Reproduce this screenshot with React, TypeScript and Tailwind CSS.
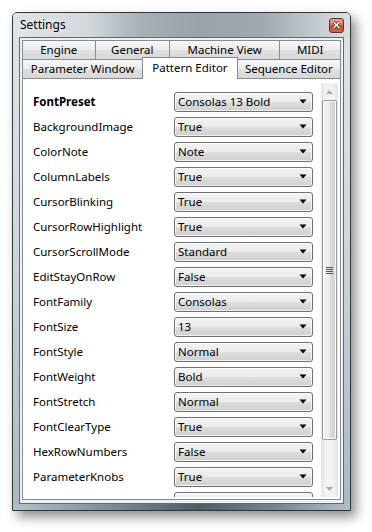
const rows: [string, string][] = [
  ["FontPreset", "Consolas 13 Bold"],
  ["BackgroundImage", "True"],
  ["ColorNote", "Note"],
  ["ColumnLabels", "True"],
  ["CursorBlinking", "True"],
  ["CursorRowHighlight", "True"],
  ["CursorScrollMode", "Standard"],
  ["EditStayOnRow", "False"],
  ["FontFamily", "Consolas"],
  ["FontSize", "13"],
  ["FontStyle", "Normal"],
  ["FontWeight", "Bold"],
  ["FontStretch", "Normal"],
  ["FontClearType", "True"],
  ["HexRowNumbers", "False"],
  ["ParameterKnobs", "True"],
  ["TextRowShade", "True"],
];

const tabsTop = [
  { label: "Engine", w: "w-[74px]" },
  { label: "General", w: "w-[76px]" },
  { label: "Machine View", w: "w-[112px]" },
  { label: "MIDI", w: "w-[62px]" },
];

const tabsBottom = [
  { label: "Parameter Window", w: "w-[122px]", active: false },
  { label: "Pattern Editor", w: "w-[96px]", active: true },
  { label: "Sequence Editor", w: "w-[105px]", active: false },
];

const tabBg =
  "bg-[linear-gradient(#f6f6f6_0%,#ececec_50%,#e0e0e0_51%,#d8d8d8_100%)]";

const Select = ({ value }: { value: string }) => (
  <div className="w-[139px] h-[20px] rounded-[3px] border border-[#707070] bg-[linear-gradient(#f3f3f3_0%,#ebebeb_50%,#dddddd_51%,#d0d0d0_100%)] flex items-center justify-between pl-[3px] pr-[5px] shadow-[inset_0_0_0_1px_rgba(255,255,255,0.7)]">
    <span className="text-[11.5px] text-black leading-none">{value}</span>
    <svg width="8" height="5" viewBox="0 0 8 5">
      <path d="M0.5 0.5 H7.5 L4 4.5 Z" fill="#000" />
    </svg>
  </div>
);

const Scrollbar = () => (
  <div className="w-[17px] h-full shrink-0 flex flex-col bg-[linear-gradient(90deg,#e4e4e4,#f3f3f3_30%,#f3f3f3_70%,#e4e4e4)]">
    <div className="h-[17px] shrink-0 flex items-center justify-center">
      <svg width="7" height="4" viewBox="0 0 7 4">
        <path d="M0 4 H7 L3.5 0 Z" fill="#a8a8a8" />
      </svg>
    </div>
    <div className="h-[340px] shrink-0 mx-[1px] rounded-[2px] border border-[#9a9a9a] bg-[linear-gradient(90deg,#f5f5f5,#ebebeb_50%,#dcdcdc_51%,#d2d2d2)] shadow-[inset_0_0_0_1px_rgba(255,255,255,0.8)] flex items-center justify-center">
      <div className="flex flex-col gap-[1px]">
        <div className="w-[7px] h-[1px] bg-[#555]" />
        <div className="w-[7px] h-[1px] bg-[#555]" />
        <div className="w-[7px] h-[1px] bg-[#555]" />
        <div className="w-[7px] h-[1px] bg-[#555]" />
      </div>
    </div>
    <div className="flex-1" />
    <div className="h-[17px] shrink-0 flex items-center justify-center">
      <svg width="7" height="4" viewBox="0 0 7 4">
        <path d="M0 0 H7 L3.5 4 Z" fill="#a8a8a8" />
      </svg>
    </div>
  </div>
);

export default function App() {
  return (
    <div
      className="w-[372px] h-[532px] bg-white overflow-hidden pl-[12px] pt-[12px]"
      style={{ fontFamily: '"Noto Sans", "Open Sans", sans-serif' }}
    >
      <div className="w-[339px] h-[499px] border border-[#30363a] rounded-t-[5px] flex flex-col bg-[linear-gradient(#dde3e7,#d3dadf_40%,#b9c6cf_75%,#a9b8c2)] shadow-[5px_6px_12px_rgba(0,0,0,0.45)]">
        {/* title bar */}
        <div className="h-[24px] shrink-0 flex items-center justify-between pl-[7px] pr-[6px] rounded-t-[4px] bg-[linear-gradient(90deg,#dfe4e8_0%,#d2d8dc_22%,#a9b0b5_38%,#9ba2a7_55%,#a3aaaf_75%,#c8ced2_92%,#d9dfe3_100%)]">
          <span className="text-[12px] text-black leading-none [text-shadow:0_0_6px_rgba(255,255,255,0.9)]">
            Settings
          </span>
          <div className="w-[15px] h-[15px] rounded-[3px] border border-[#6e2d1e] bg-[linear-gradient(#eaa48d_0%,#d9775c_45%,#c54a2e_55%,#d2684a_100%)] flex items-center justify-center">
            <svg width="9" height="8" viewBox="0 0 9 8">
              <path d="M1.5 1 L7.5 7 M7.5 1 L1.5 7" stroke="#3b2a26" strokeWidth="3" />
              <path d="M1.5 1 L7.5 7 M7.5 1 L1.5 7" stroke="#fff" strokeWidth="1.6" />
            </svg>
          </div>
        </div>

        {/* client area */}
        <div className="flex-1 min-h-0 px-[6px] flex flex-col">
          <div className="flex-1 min-h-0 border border-[#5d6b74] bg-[#f0f0f0] pl-[2px] pr-[2px] pt-[2px] pb-[3px] flex flex-col">
            <div className="flex h-[19px] shrink-0">
              {tabsTop.map((t, i) => (
                <div
                  key={t.label}
                  className={`${t.w} ${i > 0 ? "-ml-px" : ""} h-full border border-b-0 border-[#898c95] ${tabBg} flex items-center justify-center text-[11.5px] text-black leading-none`}
                >
                  {t.label}
                </div>
              ))}
            </div>
            <div className="flex h-[19px] shrink-0">
              {tabsBottom.map((t, i) =>
                t.active ? (
                  <div
                    key={t.label}
                    className={`${t.w} -ml-px relative z-10 -mt-[2px] h-[22px] border border-b-0 border-[#898c95] bg-white flex items-center justify-center text-[11.5px] text-black leading-none pb-[2px]`}
                  >
                    {t.label}
                  </div>
                ) : (
                  <div
                    key={t.label}
                    className={`${t.w} ${i > 0 ? "-ml-px" : ""} h-full border border-b-0 border-[#898c95] ${tabBg} flex items-center justify-center text-[11.5px] text-black leading-none`}
                  >
                    {t.label}
                  </div>
                )
              )}
            </div>
            {/* panel */}
            <div className="flex-1 min-h-0 border border-[#898c95] bg-white pt-[4px] pr-[2px] pb-[2px] pl-[1px] flex">
              <div className="flex-1 min-h-0 overflow-hidden pt-[6px]">
                {rows.map(([label, value], i) => (
                  <div key={label} className="h-[25px] flex items-center pl-[9px]">
                    <span
                      className={`w-[141px] text-[11.5px] text-black leading-none ${i === 0 ? "font-bold" : ""}`}
                    >
                      {label}
                    </span>
                    <Select value={value} />
                  </div>
                ))}
              </div>
              <Scrollbar />
            </div>
          </div>
        </div>

        {/* bottom frame */}
        <div className="h-[6px] shrink-0 bg-[linear-gradient(90deg,#b4c0c7_0%,#7b8a92_30%,#4f5d63_55%,#7b8a92_80%,#b4c0c7_100%)]" />
      </div>
    </div>
  );
}
